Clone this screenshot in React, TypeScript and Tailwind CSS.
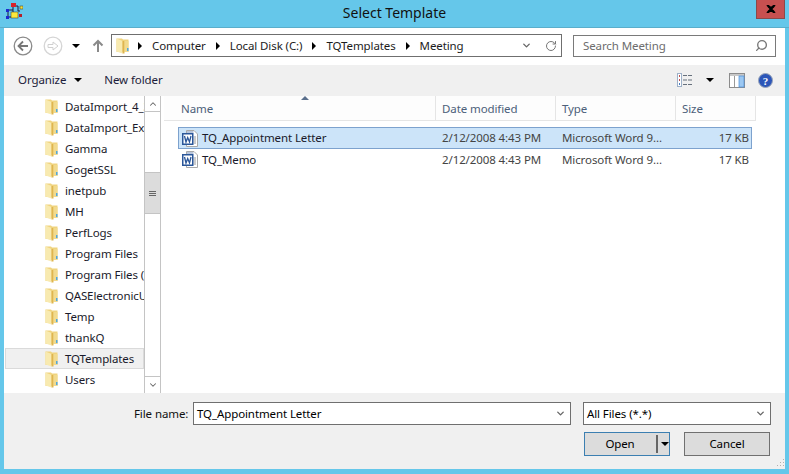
import { ChevronDown, ChevronUp, RotateCw, Search } from "lucide-react";

const folders = [
  "DataImport_4_3",
  "DataImport_Exa",
  "Gamma",
  "GogetSSL",
  "inetpub",
  "MH",
  "PerfLogs",
  "Program Files",
  "Program Files (",
  "QASElectronicU",
  "Temp",
  "thankQ",
  "TQTemplates",
  "Users",
  "",
];

const files = [
  { name: "TQ_Appointment Letter", selected: true },
  { name: "TQ_Memo", selected: false },
];

const AppLogo = () => (
  <svg width="18" height="18" viewBox="0 0 18 18" className="shrink-0">
    <path d="M3 7V14H11M8 3V11M8 3H13M13 3V8H15M8 7H3" stroke="#1a1a3a" strokeWidth="1" fill="none" />
    <rect x="6" y="0" width="5" height="4" fill="#d8232a" />
    <rect x="15" y="3" width="3" height="3" fill="#f5e23c" stroke="#333" strokeWidth="0.5" />
    <rect x="6" y="9" width="7" height="6" fill="#fbe83a" stroke="#333" strokeWidth="0.5" />
    <rect x="1" y="6" width="3" height="3" fill="#1c2bd0" />
    <rect x="1" y="13" width="3" height="3" fill="#1c2bd0" />
    <rect x="14" y="11" width="3" height="3" fill="#b3202a" />
  </svg>
);

const FolderIcon = () => (
  <svg width="13" height="16" viewBox="0 0 13 16" className="shrink-0">
    <path d="M0.5 0.5H6L7 1.5H12.5V14H0.5Z" fill="#efd37e" />
    <path d="M0.5 0.5L6.5 3V15.5L0.5 13.5Z" fill="#f8eab0" />
    <path d="M6.5 3H8.5V15.5H6.5Z" fill="#dfb54e" />
    <path d="M8.5 3H12.5V14H8.5Z" fill="#f1da8e" />
    <rect x="11" y="10" width="1.5" height="3" fill="#4fa6e0" />
  </svg>
);

const WordIcon = () => (
  <svg width="17" height="17" viewBox="0 0 17 17" className="shrink-0">
    <path d="M4.5 0.5H12L15.5 4V16.5H4.5Z" fill="#fff" stroke="#a9a9a9" />
    <path d="M11.5 7H14M11.5 9H14M11.5 11H14M11.5 13H14" stroke="#9a9a9a" />
    <path d="M5 1H11.5V3H5Z" fill="#b9c6dc" />
    <rect x="0" y="3" width="11.5" height="12" fill="#2a5699" />
    <rect x="1.5" y="4.5" width="8.5" height="9" fill="#fff" />
    <path d="M2.5 6L4 12L5.7 7.5L7.5 12L9 6" stroke="#2a5699" strokeWidth="1.3" fill="none" />
  </svg>
);

const CaretRight = () => <span className="w-0 h-0 border-y-[4px] border-y-transparent border-l-[4px] border-l-black" />;

const CaretDown = ({ className = "" }: { className?: string }) => (
  <span className={`inline-block w-0 h-0 border-x-[4px] border-x-transparent border-t-[4px] border-t-black ${className}`} />
);

const NavCircle = ({ disabled }: { disabled?: boolean }) => (
  <svg width="20" height="20" viewBox="0 0 20 20" className="shrink-0">
    <circle cx="10" cy="10" r="8.8" fill="#fff" stroke={disabled ? "#d5d5d5" : "#8a8a8a"} strokeWidth="1.3" />
    {disabled ? (
      <path d="M5 8.5H10V6L15 10L10 14V11.5H5Z" fill="#fff" stroke="#d0d0d0" />
    ) : (
      <path d="M15 10H6M10 5.5L5.5 10L10 14.5" fill="none" stroke="#777" strokeWidth="1.8" />
    )}
  </svg>
);

const UpArrow = () => (
  <svg width="12" height="14" viewBox="0 0 12 14" className="shrink-0">
    <path d="M6 13V2M1.5 6.5L6 2L10.5 6.5" fill="none" stroke="#8a8a8a" strokeWidth="2" />
  </svg>
);

const ViewIcon = () => (
  <svg width="16" height="14" viewBox="0 0 16 14" className="shrink-0">
    <rect x="0.5" y="0.5" width="4" height="13" fill="#fff" stroke="#9db0c8" />
    <rect x="2" y="2" width="1" height="2" fill="#c0504d" />
    <rect x="2" y="6" width="1" height="2" fill="#c0504d" />
    <rect x="2" y="10" width="1" height="2" fill="#4b7fc2" />
    <path d="M6 2.5H16M6 7H16M6 11.5H16" stroke="#66707c" strokeDasharray="4 1" />
  </svg>
);

const PaneIcon = () => (
  <svg width="16" height="15" viewBox="0 0 16 15" className="shrink-0">
    <rect x="0.5" y="0.5" width="15" height="14" fill="#fff" stroke="#8c8c8c" />
    <rect x="1" y="1" width="14" height="2" fill="#c8c8c8" />
    <rect x="10" y="3" width="5" height="11" fill="#9cc8f2" stroke="#4a90dc" strokeWidth="0.7" />
    <path d="M5.5 3V14" stroke="#9a9a9a" />
  </svg>
);

const HelpIcon = () => (
  <svg width="15" height="15" viewBox="0 0 15 15" className="shrink-0">
    <circle cx="7.5" cy="7.5" r="7" fill="#2c56b8" stroke="#9aa5b8" />
    <text x="7.5" y="11.5" textAnchor="middle" fontSize="11" fontWeight="700" fill="#fff" fontFamily="'Liberation Serif', serif">
      ?
    </text>
  </svg>
);

const Grip = () => (
  <svg width="11" height="11" viewBox="0 0 11 11" className="absolute right-0 bottom-0">
    <path d="M9 1h1v1H9zM6 4h1v1H6zM9 4h1v1H9zM3 7h1v1H3zM6 7h1v1H6zM9 7h1v1H9z" fill="#b0b0b0" />
  </svg>
);

const ColumnHeader = ({ label, width, pad }: { label: string; width: string; pad: string }) => (
  <div className={`${width} ${pad} h-full shrink-0 flex items-center pt-[2px] border-r-[1.5px] border-[#e5e5e5] text-[#4c607a]`}>
    {label}
  </div>
);

const App = () => {
  return (
    <div
      className="w-[789px] h-[474px] bg-[#65c7ea] flex flex-col overflow-hidden text-[11.5px] tracking-[-0.1px] text-black"
      style={{ fontFamily: "'Noto Sans', sans-serif" }}
    >
      {/* title bar */}
      <div className="h-[28px] shrink-0 flex items-start relative border-b border-[#5aaecb]">
        <div className="pl-[5px] pt-[3px]">
          <AppLogo />
        </div>
        <div className="absolute inset-x-0 top-[3px] text-center text-[14px] tracking-normal leading-[20px] text-[#111]">Select Template</div>
        <div className="absolute right-[4px] top-0 w-[29px] h-[19px] bg-[#c75050] border-x border-b border-[#8a4a4a] flex items-center justify-center">
          <svg width="10" height="8" viewBox="0 0 10 8">
            <path d="M1 0L5 3L9 0M1 8L5 5L9 8" stroke="#000" strokeWidth="2" fill="none" />
            <path d="M2 1L8 7M8 1L2 7" stroke="#000" strokeWidth="2" />
          </svg>
        </div>
      </div>

      <div className="mx-[4px] mb-[5px] flex-1 min-h-0 flex flex-col bg-white">
        {/* nav row */}
        <div className="h-[37px] shrink-0 flex items-center pl-[9px] pb-[2px]">
          <NavCircle />
          <div className="w-[10px]" />
          <NavCircle disabled />
          <CaretDown className="ml-[9px] border-t-[#9a9a9a]" />
          <div className="ml-[12px]">
            <UpArrow />
          </div>
          <div className="ml-[7px] w-[451px] h-[23px] border border-[#6f6f6f] flex items-center pl-[4px] pr-[4px] text-[#1c1c1c]">
            <FolderIcon />
            <div className="ml-[9px] flex items-center gap-[10px]">
              <CaretRight />
              <span>Computer</span>
              <CaretRight />
              <span>Local Disk (C:)</span>
              <CaretRight />
              <span>TQTemplates</span>
              <CaretRight />
              <span>Meeting</span>
            </div>
            <ChevronDown size={11} strokeWidth={3} className="ml-auto text-[#666]" />
            <RotateCw size={12} strokeWidth={2} className="ml-[13px] text-[#777]" />
          </div>
          <div className="ml-[11px] w-[203px] h-[22px] border border-[#7a7a7a] flex items-center pl-[9px] pr-[7px] text-[#6d6d6d]">
            <span>Search Meeting</span>
            <Search size={13} strokeWidth={2.5} className="ml-auto text-[#777] -scale-x-100" />
          </div>
        </div>

        {/* toolbar */}
        <div className="h-[31px] shrink-0 bg-[#f0f0f0] flex items-center pl-[14px] pr-[12px] pb-[1px] text-[#1c1c3a]">
          <span>Organize</span>
          <CaretDown className="ml-[8px]" />
          <span className="ml-[22px]">New folder</span>
          <div className="ml-auto flex items-center">
            <ViewIcon />
            <CaretDown className="ml-[13px]" />
            <div className="ml-[15px]">
              <PaneIcon />
            </div>
            <div className="ml-[13px]">
              <HelpIcon />
            </div>
          </div>
        </div>

        {/* body */}
        <div className="flex-1 min-h-0 flex">
          <div className="w-[157px] shrink-0 flex">
            <div className="w-[140px] shrink-0 overflow-hidden">
              {folders.map((name) => (
                <div
                  key={name || "more"}
                  className={`h-[21px] ml-[1px] flex items-center whitespace-nowrap overflow-hidden text-[#1a1a2a] ${
                    name === "TQTemplates" ? "bg-[#f0f0f0] border border-[#dadada] pl-[39px]" : "pl-[40px]"
                  }`}
                >
                  <FolderIcon />
                  <span className="ml-[7px]">{name}</span>
                </div>
              ))}
            </div>
            {/* scrollbar */}
            <div className="w-[17px] shrink-0 border-x border-[#c4c4c4] flex flex-col bg-white">
              <div className="h-[16px] border-b border-[#c4c4c4] flex items-center justify-center">
                <ChevronUp size={10} strokeWidth={2.5} className="text-[#666]" />
              </div>
              <div className="h-[60px]" />
              <div className="h-[42px] -mx-[1px] bg-[#dcdcdc] border border-[#c4c4c4] flex items-center justify-center">
                <div className="w-[7px] flex flex-col gap-[1px]">
                  <div className="h-[1px] bg-[#666]" />
                  <div className="h-[1px] bg-[#666]" />
                  <div className="h-[1px] bg-[#666]" />
                </div>
              </div>
              <div className="flex-1" />
              <div className="h-[17px] border-t border-[#c4c4c4] flex items-center justify-center">
                <ChevronDown size={10} strokeWidth={2.5} className="text-[#666]" />
              </div>
            </div>
          </div>

          {/* file list */}
          <div className="flex-1 min-w-0 pl-[3px]">
            <div className="h-[25px] flex border-b-[1.5px] border-[#e5e5e5] bg-[#fdfdfd] relative w-[592px]">
              <ColumnHeader label="Name" width="w-[272px]" pad="pl-[17px]" />
              <ColumnHeader label="Date modified" width="w-[120px]" pad="pl-[6px]" />
              <ColumnHeader label="Type" width="w-[120px]" pad="pl-[6px]" />
              <ColumnHeader label="Size" width="w-[80px]" pad="pl-[6px]" />
              <span className="absolute left-[137px] top-0 w-0 h-0 border-x-[4px] border-x-transparent border-b-[4px] border-b-[#5a6f8c]" />
            </div>
            <div className="pt-[6px] pl-[14px] w-[588px]">
              {files.map((file) => (
                <div
                  key={file.name}
                  className={`flex items-center border text-[#1a1a2a] ${
                    file.selected ? "h-[22px] bg-[#cce4f9] border-[#7da2ce]" : "h-[21px] border-transparent"
                  }`}
                >
                  <div className="w-[263px] shrink-0 flex items-center pl-[3px] whitespace-nowrap">
                    <WordIcon />
                    <span className="ml-[3px] text-[#1a1a2a]">{file.name}</span>
                  </div>
                  <span className="w-[120px] shrink-0 text-[#444]">2/12/2008 4:43 PM</span>
                  <span className="w-[120px] shrink-0 text-[#444] whitespace-nowrap overflow-hidden">Microsoft Word 9...</span>
                  <span className="w-[67px] shrink-0 text-right text-[#444]">17 KB</span>
                </div>
              ))}
            </div>
          </div>
        </div>

        {/* bottom panel */}
        <div className="h-[76px] shrink-0 bg-[#f0f0f0] relative pl-[130px] pr-[14px] pt-[9px]">
          <div className="flex items-center h-[23px]">
            <span className="w-[59px] shrink-0 text-[#111]">File name:</span>
            <div className="w-[378px] h-full shrink-0 bg-white border border-[#6f6f6f] flex items-center pl-[3px] pr-[4px]">
              <span>TQ_Appointment Letter</span>
              <ChevronDown size={11} strokeWidth={3} className="ml-auto text-[#666]" />
            </div>
            <div className="ml-[12px] w-[188px] h-full shrink-0 bg-white border border-[#6f6f6f] flex items-center pl-[3px] pr-[4px]">
              <span>All Files (*.*)</span>
              <ChevronDown size={11} strokeWidth={3} className="ml-auto text-[#666]" />
            </div>
          </div>
          <div className="mt-[7px] flex justify-end pr-[1px]">
            <div className="w-[86px] h-[24px] bg-[#dcdcdc] border-[1.5px] border-[#3c7fb1] flex items-center relative">
              <span className="w-[70px] text-center">Open</span>
              <span className="w-[2px] h-[18px] bg-[#666] ml-[1px]" />
              <CaretDown className="ml-[3px]" />
            </div>
            <div className="ml-[14px] w-[86px] h-[24px] bg-[#dcdcdc] border-[1.5px] border-[#707070] flex items-center justify-center">
              Cancel
            </div>
          </div>
          <Grip />
        </div>
      </div>
    </div>
  );
};

export default App;
